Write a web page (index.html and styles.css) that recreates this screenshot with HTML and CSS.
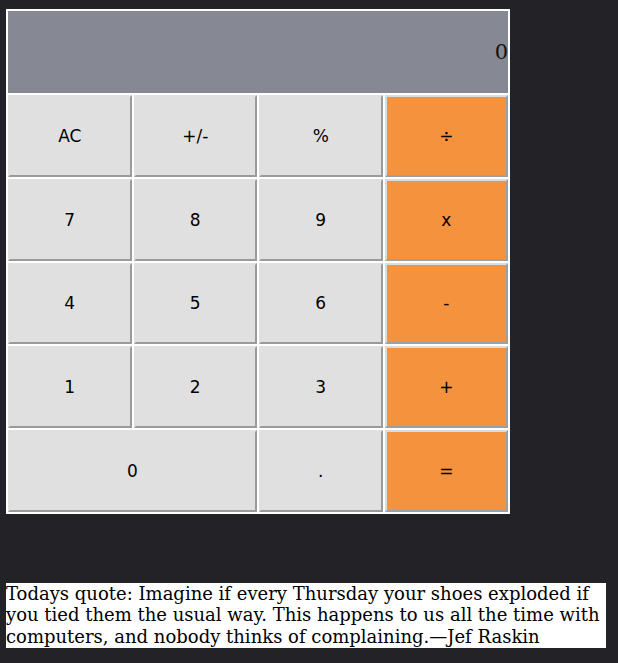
FILE: index.html
```html
<!DOCTYPE html>
<html>
<head>
<meta charset="utf-8">
<link rel="stylesheet" href="styles.css">
</head>
<body>
<div class="calc">
  <div class="display">0</div>
  <div class="keys">
    <button class="key">AC</button>
    <button class="key">+/-</button>
    <button class="key">%</button>
    <button class="key op">÷</button>
    <button class="key">7</button>
    <button class="key">8</button>
    <button class="key">9</button>
    <button class="key op">x</button>
    <button class="key">4</button>
    <button class="key">5</button>
    <button class="key">6</button>
    <button class="key op">-</button>
    <button class="key">1</button>
    <button class="key">2</button>
    <button class="key">3</button>
    <button class="key op">+</button>
    <button class="key wide">0</button>
    <button class="key">.</button>
    <button class="key op">=</button>
  </div>
</div>
<p class="quote">Todays quote: Imagine if every Thursday your shoes exploded if you tied them the usual way. This happens to us all the time with computers, and nobody thinks of complaining.—Jef Raskin</p>
</body>
</html>
```
FILE: styles.css
```css
html, body {
  margin: 0;
  background: #232227;
}
body {
  padding: 9px 6px 0 6px;
}
.calc {
  width: 500px;
  padding: 2px;
  background: #ffffff;
  display: flex;
  flex-direction: column;
  gap: 2px;
}
.display {
  height: 82px;
  background: #868893;
  color: #111;
  font-family: "DejaVu Serif", serif;
  font-size: 21px;
  display: flex;
  align-items: center;
  justify-content: flex-end;
}
.keys {
  display: grid;
  grid-template-columns: repeat(4, 1fr);
  grid-auto-rows: 81.75px;
  gap: 2px;
}
.key {
  margin: 0;
  padding: 0;
  background: #e0e0e0;
  border: 2px solid;
  border-color: #e0e0e0 #9a9a9a #9a9a9a #e0e0e0;
  font-family: "DejaVu Sans", sans-serif;
  font-size: 17px;
  color: #000;
}
.key.op {
  background: #f5923e;
  border-color: #dcdcdc #9f9f9f #9f9f9f #dcdcdc;
}
.key.wide {
  grid-column: span 2;
}
.quote {
  margin: 69px 0 0 0;
  width: 600px;
  background: #ffffff;
  color: #000;
  font-family: "DejaVu Serif", serif;
  font-size: 18px;
  line-height: 21.7px;
}
```
